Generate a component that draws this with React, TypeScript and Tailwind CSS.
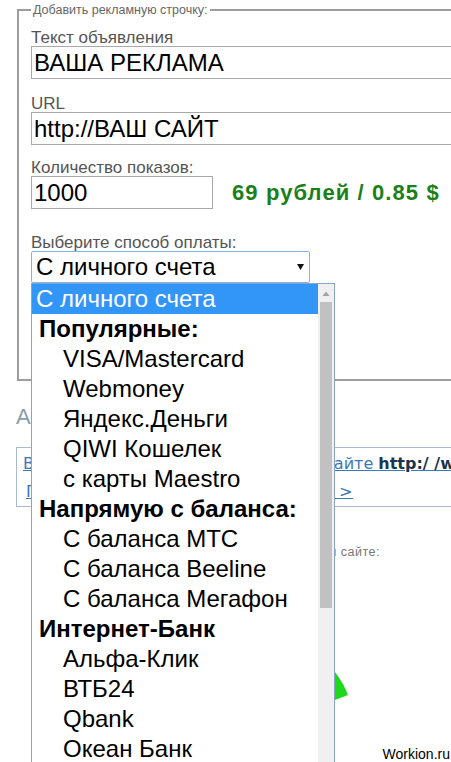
import React from 'react';

// строки раскрытого списка способов оплаты
type Row = { label: string; kind: 'selected' | 'group' | 'option' };

const rows: Row[] = [
  { label: 'С личного счета', kind: 'selected' },
  { label: 'Популярные:', kind: 'group' },
  { label: 'VISA/Mastercard', kind: 'option' },
  { label: 'Webmoney', kind: 'option' },
  { label: 'Яндекс.Деньги', kind: 'option' },
  { label: 'QIWI Кошелек', kind: 'option' },
  { label: 'с карты Maestro', kind: 'option' },
  { label: 'Напрямую с баланса:', kind: 'group' },
  { label: 'С баланса МТС', kind: 'option' },
  { label: 'С баланса Beeline', kind: 'option' },
  { label: 'С баланса Мегафон', kind: 'option' },
  { label: 'Интернет-Банк', kind: 'group' },
  { label: 'Альфа-Клик', kind: 'option' },
  { label: 'ВТБ24', kind: 'option' },
  { label: 'Qbank', kind: 'option' },
  { label: 'Океан Банк', kind: 'option' },
  { label: 'Промсвязьбанк', kind: 'option' },
];

const Label = ({ children, className = '' }: { children: React.ReactNode; className?: string }) => (
  <div className={`text-[17px] leading-[16px] text-[#555] ${className}`}>{children}</div>
);

const Field = ({ value, className = '' }: { value: string; className?: string }) => (
  <input
    readOnly
    value={value}
    className={`block h-[33px] border border-[#a9a9a9] bg-white px-[2px] text-[24px] text-black outline-none ${className}`}
  />
);

function PaymentDropdown() {
  return (
    <div className="absolute left-[31px] top-[283px] flex h-[500px] w-[304px] border border-[#8aa3c8] bg-white">
      <ul className="flex-1 text-[24px] text-black">
        {rows.map((r) => (
          <li
            key={r.label}
            className={
              r.kind === 'selected'
                ? 'flex h-[30px] items-center bg-[#3296f8] pl-[4px] text-white'
                : r.kind === 'group'
                ? 'flex h-[30px] items-center pl-[7px] font-bold'
                : 'flex h-[30px] items-center pl-[31px]'
            }
          >
            {r.label}
          </li>
        ))}
      </ul>
      {/* полоса прокрутки */}
      <div className="flex w-[16px] flex-col items-center bg-[#f0f0f0]">
        <svg width="8" height="18" viewBox="0 0 8 18" className="shrink-0">
          <path d="M0.5 12 L4 7.5 L7.5 12 Z" fill="#a3a3a3" />
        </svg>
        <div className="h-[306px] w-[12px] bg-[#c1c1c1]" />
      </div>
    </div>
  );
}

export default function App() {
  return (
    <div
      className="relative h-[762px] w-[451px] overflow-hidden bg-white"
      style={{ fontFamily: '"Liberation Sans", Arial, sans-serif' }}
    >
      <fieldset className="ml-[17px] mt-[3px] w-[480px] border-2 border-[#9d9d9d] px-3 pb-[96px]">
        <legend className="px-[2px] text-[12.5px] leading-[14px] text-[#666]">Добавить рекламную строчку:</legend>

        <Label className="mt-[13px]">Текст объявления</Label>
        <Field value="ВАША РЕКЛАМА" className="w-[440px]" />

        <Label className="mt-[17px]">URL</Label>
        <Field value="http://ВАШ САЙТ" className="w-[440px]" />

        <Label className="mt-[15px]">Количество показов:</Label>
        <div className="flex items-center">
          <Field value="1000" className="w-[182px]" />
          <span className="ml-[19px] text-[22px] font-bold tracking-[1.1px] text-[#1a801a]">69 рублей / 0.85 $</span>
        </div>

        <Label className="mt-[26px]">Выберите способ оплаты:</Label>
        <div className="flex h-[32px] w-[279px] items-center justify-between rounded-[2px] border border-[#7eb4ea] pl-[4px] pr-[5px] text-[24px] text-black">
          <span>С личного счета</span>
          <svg width="7" height="6" viewBox="0 0 7 6">
            <path d="M0 0 H7 L3.5 6 Z" fill="#111" />
          </svg>
        </div>
      </fieldset>

      <div className="px-4">
        <h2 className="mt-[23px] text-[22px] leading-[26px] text-[#8a9bab]">Активные</h2>

        <div
          className="mt-[17px] w-[470px] border border-[#a9bbd0] pl-[6px] pt-[2px] text-[16px] leading-[28px]"
          style={{ fontFamily: '"DejaVu Sans", Verdana, sans-serif' }}
        >
          <div className="whitespace-nowrap">
            <a className="text-[#3b77b5] underline">
              Ваша реклама будет тут на нашем сайте <b className="text-[#1a3550]">http:/ /workion.ru</b>
            </a>
          </div>
          <div className="whitespace-nowrap pl-[3px] tracking-[0.85px]">
            <a className="text-[#3b77b5] underline">Подробнее о рекламе на сайте &gt; &gt;</a>
          </div>
        </div>

        <p className="mt-[36px] w-[364px] text-right text-[12.5px] tracking-[0.5px] text-[#777]">Статистика показов на этом сайте:</p>
      </div>

      {/* круговая диаграмма, почти целиком под списком */}
      <svg className="absolute left-[250px] top-[640px]" width="110" height="80" viewBox="0 0 110 80">
        <path d="M60 60 L85 32 Q94 44 98 55 L85 60 Z" fill="#1ed81e" />
      </svg>

      <div className="absolute bottom-0 right-[1px] text-[14px] leading-[15px] text-black">Workion.ru</div>

      <PaymentDropdown />
    </div>
  );
}
